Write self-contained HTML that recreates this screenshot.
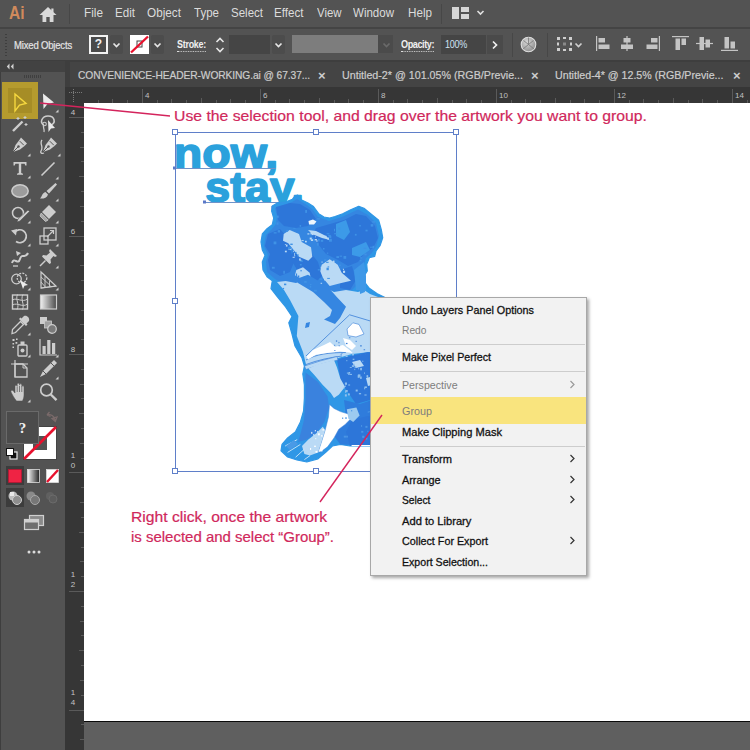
<!DOCTYPE html>
<html lang="en">
<head>
<meta charset="utf-8">
<title>Illustrator - Group artwork</title>
<style>
html,body{margin:0;padding:0;}
body{width:750px;height:750px;overflow:hidden;background:#535353;font-family:"Liberation Sans",sans-serif;}
#app{position:relative;width:750px;height:750px;overflow:hidden;background:#535353;}
.a{position:absolute;}
.t{position:absolute;white-space:nowrap;line-height:1;transform-origin:0 50%;}
/* bars */
#menubar{left:0;top:0;width:750px;height:27px;background:#535353;}
#sep1{left:0;top:27px;width:750px;height:2px;background:#444;}
#ctrl{left:0;top:29px;width:750px;height:31px;background:#535353;}
#tabrow{left:0;top:60px;width:750px;height:28px;background:#3e3e3e;}
#tabs{left:70px;top:62px;width:680px;height:25px;background:#444;}
#tools{left:0;top:72px;width:65px;height:678px;background:#535353;}
#toolhead{left:0;top:61px;width:65px;height:12px;background:#424242;}
#gut{left:66px;top:60px;width:4px;height:690px;background:#3c3c3c;}
#hruler{left:65px;top:87px;width:685px;height:16px;background:#363636;}
#vruler{left:65px;top:87px;width:19px;height:663px;background:#363636;}
#canvas{left:84px;top:103px;width:666px;height:618px;background:#fff;}
#bline{left:84px;top:720.5px;width:666px;height:1.5px;background:#0a0a0a;}
#bgray{left:84px;top:722px;width:666px;height:28px;background:#5f5f5f;}
.menu{color:#dcdcdc;font-size:12.5px;top:7px;}
.ann{color:#d0285c;font-size:14.5px;-webkit-text-stroke:0.2px #d0285c;}
.rl{color:#cfcfcf;font-size:9px;}
/* context menu */
#cm{left:370px;top:297px;width:215px;height:277px;background:#f2f2f2;border:1px solid #a8a8a8;box-shadow:2px 2px 3px rgba(0,0,0,.35);}
.mi{position:absolute;left:31px;white-space:nowrap;font-size:11.5px;color:#111;line-height:14px;-webkit-text-stroke:0.3px #111;}
.mi.dis{color:#7d7d7d;-webkit-text-stroke:0;}
.ms{position:absolute;left:29px;width:185px;height:1px;background:#cdcdcd;}
.arr{position:absolute;left:198px;font-size:12px;color:#333;line-height:14px;}
</style>
</head>
<body>
<div id="app">
<!--CHROME-->
<div class="a" id="menubar"></div>
<div class="a" id="sep1"></div>
<div class="a" id="ctrl"></div>
<div class="a" id="tabrow"></div>
<div class="a" id="tabs"></div>
<div class="a" id="toolhead"></div>
<div class="a" id="tools"></div>
<div class="a" id="vruler"></div>
<div class="a" id="hruler"></div>
<div class="a" id="canvas"></div>
<div class="a" id="bline"></div>
<div class="a" id="bgray"></div>
<div class="a" style="left:0;top:72px;width:1px;height:678px;background:#3e3e3e"></div>
<!--MENUBAR-->
<div class="t" id="ailogo" style="transform:scaleX(0.8158);left:9px;top:3px;font-size:19px;font-weight:bold;color:#d08a5c;">Ai</div>
<svg class="a" style="left:38px;top:6px" width="20" height="18" viewBox="0 0 20 18"><path d="M10 1 L1.5 9 H4.5 V16 H8.3 V11 H11.7 V16 H15.5 V9 H18.5 Z" fill="#d9d9d9"/><rect x="13.3" y="2.5" width="2.2" height="4" fill="#d9d9d9"/></svg>
<div class="a" style="left:69px;top:4px;width:1px;height:20px;background:#474747"></div>
<div class="t menu" id="mFile" style="transform:scaleX(0.9426);left:84px;">File</div>
<div class="t menu" id="mEdit" style="transform:scaleX(0.9282);left:115px;">Edit</div>
<div class="t menu" id="mObject" style="transform:scaleX(0.9408);left:147px;">Object</div>
<div class="t menu" id="mType" style="transform:scaleX(0.9222);left:194px;">Type</div>
<div class="t menu" id="mSelect" style="transform:scaleX(0.9209);left:231px;">Select</div>
<div class="t menu" id="mEffect" style="transform:scaleX(0.9296);left:274px;">Effect</div>
<div class="t menu" id="mView" style="transform:scaleX(0.9116);left:317px;">View</div>
<div class="t menu" id="mWindow" style="transform:scaleX(0.9220);left:353px;">Window</div>
<div class="t menu" id="mHelp" style="transform:scaleX(0.9332);left:408px;">Help</div>
<div class="a" style="left:441px;top:4px;width:1px;height:20px;background:#474747"></div>
<svg class="a" style="left:452px;top:7px" width="36" height="13" viewBox="0 0 36 13"><rect x="0" y="0" width="7" height="12" fill="#d6d6d6"/><rect x="9" y="0" width="8" height="5" fill="#d6d6d6"/><rect x="9" y="7" width="8" height="5" fill="#d6d6d6"/><path d="M25.5 4 L28.5 7 L31.5 4" stroke="#e0e0e0" stroke-width="1.6" fill="none"/></svg>
<!--CTRLBAR-->
<div class="a" style="left:110px;top:35px;width:13px;height:19px;background:#4c4c4c;border-radius:2px"></div>
<div class="a" style="left:151px;top:35px;width:13px;height:19px;background:#4c4c4c;border-radius:2px"></div>
<div class="a" style="left:272px;top:35px;width:13px;height:19px;background:#4c4c4c;border-radius:2px"></div>
<div class="a" style="left:5px;top:34px;width:2px;height:22px;background:repeating-linear-gradient(to bottom,#3e3e3e 0 1px,transparent 1px 3px)"></div>
<div class="t" style="transform:scaleX(0.9071);left:14px;top:40px;font-size:10.5px;color:#e4e4e4;letter-spacing:-0.2px;-webkit-text-stroke:0.2px #e4e4e4" id="mixed">Mixed Objects</div>
<div class="a" style="left:89px;top:35px;width:15px;height:15px;border:2px solid #f2f2f2;background:#4a4a4a;color:#f0f0f0;font-size:12px;font-weight:bold;text-align:center;line-height:15px;">?</div>
<svg class="a" style="left:112px;top:42px" width="9" height="7" viewBox="0 0 9 7"><path d="M1.5 1.5 L4.5 4.5 L7.5 1.5" stroke="#e6e6e6" stroke-width="1.7" fill="none"/></svg>
<svg class="a" style="left:130px;top:35px" width="19" height="19" viewBox="0 0 19 19"><rect x="0" y="0" width="19" height="19" fill="#fff"/><rect x="7" y="6" width="5" height="6" fill="none" stroke="#444" stroke-width="1"/><path d="M1 17.5 L18 1.5" stroke="#e8112d" stroke-width="2.4"/></svg>
<svg class="a" style="left:153px;top:42px" width="9" height="7" viewBox="0 0 9 7"><path d="M1.5 1.5 L4.5 4.5 L7.5 1.5" stroke="#e6e6e6" stroke-width="1.7" fill="none"/></svg>
<div class="t" style="transform:scaleX(0.8510);left:177px;top:39px;font-size:10.5px;color:#f0f0f0;font-weight:bold;letter-spacing:-0.3px;border-bottom:1px dotted #ddd;padding-bottom:1px" id="stroke">Stroke:</div>
<svg class="a" style="left:215px;top:36px" width="10" height="18" viewBox="0 0 10 18"><path d="M1.5 6 L5 2.5 L8.5 6 M1.5 12 L5 15.5 L8.5 12" stroke="#e6e6e6" stroke-width="1.6" fill="none"/></svg>
<div class="a" style="left:229px;top:35px;width:41px;height:19px;background:#454545"></div>
<svg class="a" style="left:274px;top:42px" width="9" height="7" viewBox="0 0 9 7"><path d="M1.5 1.5 L4.5 4.5 L7.5 1.5" stroke="#e6e6e6" stroke-width="1.7" fill="none"/></svg>
<div class="a" style="left:292px;top:35px;width:86px;height:18px;background:#7d7d7d"></div>
<div class="a" style="left:378px;top:35px;width:15px;height:18px;background:#4b4b4b"></div>
<svg class="a" style="left:382px;top:42px" width="9" height="7" viewBox="0 0 9 7"><path d="M1.5 1.5 L4.5 4.5 L7.5 1.5" stroke="#6a6a6a" stroke-width="1.7" fill="none"/></svg>
<div class="t" style="transform:scaleX(0.8681);left:401px;top:39px;font-size:10.5px;color:#f0f0f0;font-weight:bold;letter-spacing:-0.5px;border-bottom:1px dotted #ddd;padding-bottom:1px" id="opac">Opacity:</div>
<div class="a" style="left:441px;top:35px;width:45px;height:19px;background:#454545"></div>
<div class="t" style="transform:scaleX(0.9020);left:445px;top:40px;font-size:10px;color:#cfe2f3;letter-spacing:-0.3px" id="pct">100%</div>
<div class="a" style="left:487px;top:35px;width:16px;height:19px;background:#4a4a4a"></div>
<svg class="a" style="left:491px;top:40px" width="8" height="10" viewBox="0 0 8 10"><path d="M2 1.5 L5.5 5 L2 8.5" stroke="#f0f0f0" stroke-width="1.7" fill="none"/></svg>
<div class="a" style="left:512px;top:33px;width:1px;height:24px;background:#474747"></div>
<svg class="a" style="left:520px;top:36px" width="17" height="17" viewBox="0 0 17 17"><defs><radialGradient id="gl" cx="0.4" cy="0.35" r="0.7"><stop offset="0" stop-color="#d8d8d8"/><stop offset="1" stop-color="#8c8c8c"/></radialGradient></defs><circle cx="8.500" cy="8.500" r="7.300" fill="url(#gl)" stroke="#dedede" stroke-width="1.1"/><path d="M8.500 1.500 V8.500 L3 13 M8.500 8.500 L14 13 M3.500 4.500 L8.500 8.500 L13.500 4.500" stroke="#777" stroke-width="0.8" fill="none"/></svg>
<div class="a" style="left:547px;top:33px;width:1px;height:24px;background:#474747"></div>
<svg class="a" style="left:557px;top:37px" width="15" height="14" viewBox="0 0 15 14"><g fill="#cfcfcf"><rect x="0" y="0" width="3" height="3"/><rect x="6" y="0" width="3" height="2"/><rect x="12" y="0" width="3" height="3"/><rect x="0" y="5.500" width="2" height="3"/><rect x="13" y="5.500" width="2" height="3"/><rect x="0" y="11" width="3" height="3"/><rect x="6" y="12" width="3" height="2"/><rect x="12" y="11" width="3" height="3"/><rect x="6" y="5.500" width="3" height="3" fill="#8a8a8a"/></g></svg>
<svg class="a" style="left:574px;top:42px" width="9" height="7" viewBox="0 0 9 7"><path d="M1.5 1.5 L4.5 4.5 L7.5 1.5" stroke="#cfcfcf" stroke-width="1.7" fill="none"/></svg>
<svg class="a" style="left:596px;top:36px" width="14" height="15" viewBox="0 0 14 15"><g fill="#c4c4c4"><rect x="0" y="0" width="1.2" height="15"/><rect x="2.500" y="2" width="6.500" height="4.500"/><rect x="2.500" y="8.500" width="11" height="4.500"/></g></svg>
<svg class="a" style="left:620px;top:36px" width="14" height="15" viewBox="0 0 14 15"><g fill="#c4c4c4"><rect x="6.400" y="0" width="1.2" height="15"/><rect x="3.500" y="2" width="7" height="4.500"/><rect x="1" y="8.500" width="12" height="4.500"/></g></svg>
<svg class="a" style="left:646px;top:36px" width="14" height="15" viewBox="0 0 14 15"><g fill="#c4c4c4"><rect x="12.800" y="0" width="1.2" height="15"/><rect x="5" y="2" width="6.500" height="4.500"/><rect x="0.500" y="8.500" width="11" height="4.500"/></g></svg>
<svg class="a" style="left:672px;top:36px" width="17" height="15" viewBox="0 0 17 15"><g fill="#c4c4c4"><rect x="0" y="0" width="17" height="1.2"/><rect x="3.500" y="2.500" width="4.500" height="11.500"/><rect x="9.500" y="2.500" width="4.500" height="6.500"/></g></svg>
<svg class="a" style="left:696px;top:36px" width="17" height="15" viewBox="0 0 17 15"><g fill="#c4c4c4"><rect x="0" y="6.900" width="17" height="1.2"/><rect x="3.500" y="1" width="4.500" height="13"/><rect x="9.500" y="3.500" width="4.500" height="8"/></g></svg>
<svg class="a" style="left:721px;top:36px" width="17" height="15" viewBox="0 0 17 15"><g fill="#c4c4c4"><rect x="0" y="13.800" width="17" height="1.2"/><rect x="3.500" y="1" width="4.500" height="11.500"/><rect x="9.500" y="5.500" width="4.500" height="7"/></g></svg>
<!--TABS-->
<div class="t" style="transform:scaleX(0.9309);left:78px;top:70px;font-size:11px;color:#cdcdcd;letter-spacing:-0.1px;-webkit-text-stroke:0.2px #cdcdcd" id="tab1">CONVENIENCE-HEADER-WORKING.ai @ 67.37...</div>
<div class="t" style="left:318px;top:69px;font-size:13px;color:#cdcdcd;font-weight:bold">×</div>
<div class="t" style="transform:scaleX(0.9730);left:342px;top:70px;font-size:11px;color:#cdcdcd;-webkit-text-stroke:0.2px #cdcdcd" id="tab2">Untitled-2* @ 101.05% (RGB/Previe...</div>
<div class="t" style="left:531px;top:69px;font-size:13px;color:#cdcdcd;font-weight:bold">×</div>
<div class="t" style="transform:scaleX(0.9695);left:555px;top:70px;font-size:11px;color:#cdcdcd;-webkit-text-stroke:0.2px #cdcdcd" id="tab3">Untitled-4* @ 12.5% (RGB/Previe...</div>
<div class="t" style="left:733px;top:69px;font-size:13px;color:#cdcdcd;font-weight:bold">×</div>
<!--RULERS-->
<svg class="a" style="left:0;top:89px" width="750" height="14" viewBox="0 0 750 14"><g stroke="#5a5a5a" stroke-width="1" shape-rendering="crispEdges"><line x1="98.5" y1="11" x2="98.5" y2="14"/><line x1="112.5" y1="10" x2="112.5" y2="14"/><line x1="127.5" y1="11" x2="127.5" y2="14"/><line x1="142.5" y1="-1" x2="142.5" y2="14"/><line x1="157.5" y1="11" x2="157.5" y2="14"/><line x1="171.5" y1="10" x2="171.5" y2="14"/><line x1="186.5" y1="11" x2="186.5" y2="14"/><line x1="201.5" y1="9" x2="201.5" y2="14"/><line x1="216.5" y1="11" x2="216.5" y2="14"/><line x1="230.5" y1="10" x2="230.5" y2="14"/><line x1="245.5" y1="11" x2="245.5" y2="14"/><line x1="260.5" y1="-1" x2="260.5" y2="14"/><line x1="275.5" y1="11" x2="275.5" y2="14"/><line x1="289.5" y1="10" x2="289.5" y2="14"/><line x1="304.5" y1="11" x2="304.5" y2="14"/><line x1="319.5" y1="9" x2="319.5" y2="14"/><line x1="334.5" y1="11" x2="334.5" y2="14"/><line x1="348.5" y1="10" x2="348.5" y2="14"/><line x1="363.5" y1="11" x2="363.5" y2="14"/><line x1="378.5" y1="-1" x2="378.5" y2="14"/><line x1="393.5" y1="11" x2="393.5" y2="14"/><line x1="407.5" y1="10" x2="407.5" y2="14"/><line x1="422.5" y1="11" x2="422.5" y2="14"/><line x1="437.5" y1="9" x2="437.5" y2="14"/><line x1="452.5" y1="11" x2="452.5" y2="14"/><line x1="466.5" y1="10" x2="466.5" y2="14"/><line x1="481.5" y1="11" x2="481.5" y2="14"/><line x1="496.5" y1="-1" x2="496.5" y2="14"/><line x1="511.5" y1="11" x2="511.5" y2="14"/><line x1="525.5" y1="10" x2="525.5" y2="14"/><line x1="540.5" y1="11" x2="540.5" y2="14"/><line x1="555.5" y1="9" x2="555.5" y2="14"/><line x1="570.5" y1="11" x2="570.5" y2="14"/><line x1="584.5" y1="10" x2="584.5" y2="14"/><line x1="599.5" y1="11" x2="599.5" y2="14"/><line x1="614.5" y1="-1" x2="614.5" y2="14"/><line x1="629.5" y1="11" x2="629.5" y2="14"/><line x1="643.5" y1="10" x2="643.5" y2="14"/><line x1="658.5" y1="11" x2="658.5" y2="14"/><line x1="673.5" y1="9" x2="673.5" y2="14"/><line x1="688.5" y1="11" x2="688.5" y2="14"/><line x1="702.5" y1="10" x2="702.5" y2="14"/><line x1="717.5" y1="11" x2="717.5" y2="14"/><line x1="732.5" y1="-1" x2="732.5" y2="14"/><line x1="747.5" y1="11" x2="747.5" y2="14"/></g><g font-family="Liberation Sans, sans-serif" font-size="8" fill="#c0c0c0"><text x="145.0" y="9">4</text><text x="263.0" y="9">6</text><text x="381.0" y="9">8</text><text x="499.0" y="9">10</text><text x="617.0" y="9">12</text><text x="735.0" y="9">14</text></g></svg>
<svg class="a" style="left:68px;top:88px" width="16" height="15" viewBox="0 0 16 15"><path d="M5.5 1 V15 M1 4.500 H15" stroke="#7a7a7a" stroke-width="1" stroke-dasharray="1 1" fill="none"/></svg>
<svg class="a" style="left:66px;top:102px" width="18" height="648" viewBox="0 0 18 648"><g stroke="#5a5a5a" stroke-width="1" shape-rendering="crispEdges"><line x1="3" y1="15.5" x2="18" y2="15.5"/><line x1="15" y1="30.5" x2="18" y2="30.5"/><line x1="14" y1="45.5" x2="18" y2="45.5"/><line x1="15" y1="59.5" x2="18" y2="59.5"/><line x1="13" y1="74.5" x2="18" y2="74.5"/><line x1="15" y1="89.5" x2="18" y2="89.5"/><line x1="14" y1="104.5" x2="18" y2="104.5"/><line x1="15" y1="119.5" x2="18" y2="119.5"/><line x1="3" y1="134.5" x2="18" y2="134.5"/><line x1="15" y1="148.5" x2="18" y2="148.5"/><line x1="14" y1="163.5" x2="18" y2="163.5"/><line x1="15" y1="178.5" x2="18" y2="178.5"/><line x1="13" y1="193.5" x2="18" y2="193.5"/><line x1="15" y1="208.5" x2="18" y2="208.5"/><line x1="14" y1="222.5" x2="18" y2="222.5"/><line x1="15" y1="237.5" x2="18" y2="237.5"/><line x1="3" y1="252.5" x2="18" y2="252.5"/><line x1="15" y1="267.5" x2="18" y2="267.5"/><line x1="14" y1="282.5" x2="18" y2="282.5"/><line x1="15" y1="296.5" x2="18" y2="296.5"/><line x1="13" y1="311.5" x2="18" y2="311.5"/><line x1="15" y1="326.5" x2="18" y2="326.5"/><line x1="14" y1="341.5" x2="18" y2="341.5"/><line x1="15" y1="356.5" x2="18" y2="356.5"/><line x1="3" y1="370.5" x2="18" y2="370.5"/><line x1="15" y1="385.5" x2="18" y2="385.5"/><line x1="14" y1="400.5" x2="18" y2="400.5"/><line x1="15" y1="415.5" x2="18" y2="415.5"/><line x1="13" y1="430.5" x2="18" y2="430.5"/><line x1="15" y1="445.5" x2="18" y2="445.5"/><line x1="14" y1="459.5" x2="18" y2="459.5"/><line x1="15" y1="474.5" x2="18" y2="474.5"/><line x1="3" y1="489.5" x2="18" y2="489.5"/><line x1="15" y1="504.5" x2="18" y2="504.5"/><line x1="14" y1="519.5" x2="18" y2="519.5"/><line x1="15" y1="533.5" x2="18" y2="533.5"/><line x1="13" y1="548.5" x2="18" y2="548.5"/><line x1="15" y1="563.5" x2="18" y2="563.5"/><line x1="14" y1="578.5" x2="18" y2="578.5"/><line x1="15" y1="593.5" x2="18" y2="593.5"/><line x1="3" y1="608.5" x2="18" y2="608.5"/><line x1="15" y1="622.5" x2="18" y2="622.5"/><line x1="14" y1="637.5" x2="18" y2="637.5"/></g><g font-family="Liberation Sans, sans-serif" font-size="8" fill="#c4c4c4" text-anchor="middle"><text x="7" y="13.0">4</text><text x="7" y="131.5">6</text><text x="7" y="250.0">8</text><text x="7" y="356.0">1</text><text x="7" y="366.0">0</text><text x="7" y="474.5">1</text><text x="7" y="484.5">2</text><text x="7" y="593.0">1</text><text x="7" y="603.0">4</text></g></svg>
<!--TOOLS-->
<svg class="a" style="left:6px;top:63px" width="8" height="7" viewBox="0 0 8 7"><path d="M3.5 0.5 L0.8 3.5 L3.5 6.5 Z M7.5 0.5 L4.8 3.5 L7.5 6.5 Z" fill="#d0d0d0"/></svg>
<div class="a" style="left:24px;top:75px;width:18px;height:3px;background:repeating-linear-gradient(to right,#3f3f3f 0 1px,transparent 1px 2px)"></div>
<div class="a" style="left:2px;top:82px;width:36px;height:37px;background:#b59b2e"></div>
<div class="a" style="left:8px;top:88px;width:24px;height:25px;background:#a68d26"></div>
<svg class="a" style="left:9.5px;top:91.7px" width="22" height="22" viewBox="-10 -10 22 22"><path d="M-5 -8 L6 1.5 L-0.5 3 L-5 9 Z" fill="none" stroke="#f6d83f" stroke-width="1.4" stroke-linejoin="miter"/></svg>
<svg class="a" style="left:37.5px;top:91.7px" width="22" height="22" viewBox="-10 -10 22 22"><path d="M-5 -8.5 L6 0.5 L-0.5 2 L-4.5 7 Z" fill="#ececec"/><path d="M10.5 7.5 V10.5 H7.5 Z" fill="#cfcfcf"/></svg>
<svg class="a" style="left:9.5px;top:114.0px" width="22" height="22" viewBox="-10 -10 22 22"><path d="M-7 7 L2.5 -2.5" stroke="#cdcdcd" stroke-width="2.4" stroke-linecap="butt"/><path d="M-2 -7 v3 M-3.5 -5.5 h3 M5 -8 v3 M3.5 -6.5 h3 M6 -1 v3 M4.5 0.5 h3" stroke="#cdcdcd" stroke-width="1.1"/></svg>
<svg class="a" style="left:37.5px;top:114.0px" width="22" height="22" viewBox="-10 -10 22 22"><path d="M-4 1 C-9 -1 -6 -8 0 -8 C7 -8 8 -1 3 1" fill="none" stroke="#cdcdcd" stroke-width="1.6"/><path d="M-4 1 C-6 3 -3 5 -4 8" fill="none" stroke="#cdcdcd" stroke-width="1.3"/><circle cx="-3.5" cy="0" r="1.8" fill="none" stroke="#cdcdcd" stroke-width="1.1"/><path d="M0 -4 L7 4 L3 4.5 L0.5 8 Z" fill="#e8e8e8"/></svg>
<svg class="a" style="left:9.5px;top:136.3px" width="22" height="22" viewBox="-10 -10 22 22"><path d="M1 -8.5 L7 -2.5 L4.5 0 L0 3.5 L-7 6 L-4.5 -1 L-1 -5.5 Z" fill="#cdcdcd"/><path d="M-7 6 L-2 1" stroke="#535353" stroke-width="1"/><circle cx="-1.5" cy="0.5" r="1.2" fill="#535353"/><path d="M3.8 -0.8 L-0.2 -4.8" stroke="#535353" stroke-width="1"/><path d="M10.5 7.5 V10.5 H7.5 Z" fill="#cfcfcf"/></svg>
<svg class="a" style="left:39.5px;top:136.3px" width="22" height="22" viewBox="-10 -10 22 22"><path d="M1 -8.5 L7 -2.5 L4.5 0 L0 3.5 L-7 6 L-4.5 -1 L-1 -5.5 Z" fill="#cdcdcd"/><path d="M-7 6 L-2 1" stroke="#535353" stroke-width="1"/><circle cx="-1.5" cy="0.5" r="1.2" fill="#535353"/><path d="M3.8 -0.8 L-0.2 -4.8" stroke="#535353" stroke-width="1"/><path d="M-8 -6 C-11 -2 -6 0 -9 5 C-10 7 -8 8 -6 7" fill="none" stroke="#cdcdcd" stroke-width="1.3"/><path d="M10.5 7.5 V10.5 H7.5 Z" fill="#cfcfcf"/></svg>
<svg class="a" style="left:9.5px;top:158.1px" width="22" height="22" viewBox="-10 -10 22 22"><path d="M-6.5 -6 H6.5 V-2.500 H5.3 L4.6 -4.300 H1.2 V5 L3 5.700 V6.700 H-3 V5.700 L-1.2 5 V-4.300 H-4.600 L-5.300 -2.500 H-6.500 Z" fill="#cdcdcd"/><path d="M10.5 7.5 V10.5 H7.5 Z" fill="#cfcfcf"/></svg>
<svg class="a" style="left:37.5px;top:158.6px" width="22" height="22" viewBox="-10 -10 22 22"><path d="M-6.5 6.5 L6.5 -6.5" stroke="#cdcdcd" stroke-width="1.6"/><path d="M10.5 7.5 V10.5 H7.5 Z" fill="#cfcfcf"/></svg>
<svg class="a" style="left:9.5px;top:180.9px" width="22" height="22" viewBox="-10 -10 22 22"><ellipse cx="0" cy="0" rx="8.2" ry="6.2" fill="#9c9c9c" stroke="#cdcdcd" stroke-width="1.5"/><path d="M10.5 7.5 V10.5 H7.5 Z" fill="#cfcfcf"/></svg>
<svg class="a" style="left:37.5px;top:180.9px" width="22" height="22" viewBox="-10 -10 22 22"><path d="M7.5 -8 L9 -6.5 L1 2.5 L-1.5 0 Z" fill="#cdcdcd"/><path d="M-2.5 1 L0 3.5 C-1 7 -5 8 -8 7.5 C-6 6 -6 2 -2.5 1 Z" fill="#cdcdcd"/><path d="M10.5 7.5 V10.5 H7.5 Z" fill="#cfcfcf"/></svg>
<svg class="a" style="left:9.5px;top:203.2px" width="22" height="22" viewBox="-10 -10 22 22"><circle cx="-2" cy="0" r="5.5" fill="none" stroke="#cdcdcd" stroke-width="1.5"/><path d="M8 -3 L9.5 -1.5 L0 8 L-3 9 L-2 6 Z" fill="#cdcdcd" stroke="#535353" stroke-width="0.6"/><path d="M10.5 7.5 V10.5 H7.5 Z" fill="#cfcfcf"/></svg>
<svg class="a" style="left:37.5px;top:203.2px" width="22" height="22" viewBox="-10 -10 22 22"><path d="M1 -8 L8 -1 L1 6 L-6 -1 Z" fill="#cdcdcd"/><path d="M-6.8 0 L0.2 7 L-2.5 8.5 L-8 3 Z" fill="#a8a8a8" stroke="#cdcdcd" stroke-width="0.8"/><path d="M10.5 7.5 V10.5 H7.5 Z" fill="#cfcfcf"/></svg>
<svg class="a" style="left:9.5px;top:225.5px" width="22" height="22" viewBox="-10 -10 22 22"><path d="M-5.5 -3.5 A6.5 6.5 0 1 1 -4 5.5" fill="none" stroke="#cdcdcd" stroke-width="1.7"/><path d="M-9 -5.5 L-3 -7 L-4 -0.5 Z" fill="#cdcdcd"/><path d="M10.5 7.5 V10.5 H7.5 Z" fill="#cfcfcf"/></svg>
<svg class="a" style="left:37.5px;top:225.5px" width="22" height="22" viewBox="-10 -10 22 22"><rect x="-8" y="0" width="8" height="8" fill="none" stroke="#cdcdcd" stroke-width="1.3"/><rect x="-4" y="-8" width="12" height="12" fill="none" stroke="#cdcdcd" stroke-width="1.3"/><path d="M-1 1 L5 -5 M2 -5.5 H5.5 V-2" stroke="#cdcdcd" stroke-width="1.2" fill="none"/><path d="M10.5 7.5 V10.5 H7.5 Z" fill="#cfcfcf"/></svg>
<svg class="a" style="left:9.5px;top:247.8px" width="22" height="22" viewBox="-10 -10 22 22"><path d="M-8 5 C-6 -2 -2 8 0 1 C2 -6 5 2 8 -5" fill="none" stroke="#cdcdcd" stroke-width="2"/><path d="M-4 -7 L1 -5 L-3 -2 Z" fill="#cdcdcd"/><path d="M-7 8 h5" stroke="#cdcdcd" stroke-width="1.3"/><path d="M10.5 7.5 V10.5 H7.5 Z" fill="#cfcfcf"/></svg>
<svg class="a" style="left:37.5px;top:247.8px" width="22" height="22" viewBox="-10 -10 22 22"><path d="M2 -9 L9 -2 L7 -1 L5.5 -2 L2.5 1.5 L3 5 L1.5 6 L-6 -1.5 L-5 -3 L-1.5 -2.5 L2 -5.5 L1 -7 Z" fill="#cdcdcd"/><path d="M-2.5 2.5 L-8 8" stroke="#cdcdcd" stroke-width="1.5"/><path d="M10.5 7.5 V10.5 H7.5 Z" fill="#cfcfcf"/></svg>
<svg class="a" style="left:9.5px;top:270.1px" width="22" height="22" viewBox="-10 -10 22 22"><circle cx="-3.5" cy="-1" r="4.8" fill="none" stroke="#cdcdcd" stroke-width="1.3"/><circle cx="2" cy="-2" r="4.8" fill="none" stroke="#cdcdcd" stroke-width="1.3" stroke-dasharray="2 1.2"/><path d="M0 0 L8 5 L4.5 5.8 L3 9 Z" fill="#ececec"/><path d="M10.5 7.5 V10.5 H7.5 Z" fill="#cfcfcf"/></svg>
<svg class="a" style="left:37.5px;top:270.1px" width="22" height="22" viewBox="-10 -10 22 22"><path d="M-7 -8 V8 L8 6 Z" fill="none" stroke="#cdcdcd" stroke-width="1.2"/><path d="M-7 -3 L2.5 5.7 M-7 2 L-2.5 7.2 M-3 -3.8 V7.3 M1.5 1 V6.8 M-7 8 L8 6" stroke="#cdcdcd" stroke-width="0.9" fill="none"/><path d="M10.5 7.5 V10.5 H7.5 Z" fill="#cfcfcf"/></svg>
<svg class="a" style="left:9.5px;top:292.4px" width="22" height="22" viewBox="-10 -10 22 22"><rect x="-7.5" y="-7" width="15" height="14" fill="none" stroke="#cdcdcd" stroke-width="1.4"/><path d="M-7.5 -2 C-3 -5 2 1 7.5 -3 M-7.5 3 C-2 0 2 6 7.5 2 M-2.5 -7.5 C-5 -2 0 2 -3 7.5 M3 -7.5 C0 -2 5 2 2.5 7.5" fill="none" stroke="#cdcdcd" stroke-width="1"/></svg>
<svg class="a" style="left:37.5px;top:292.4px" width="22" height="22" viewBox="-10 -10 22 22"><defs><linearGradient id="gg" x1="0" x2="1" y1="0" y2="0"><stop offset="0" stop-color="#f2f2f2"/><stop offset="1" stop-color="#4a4a4a"/></linearGradient></defs><rect x="-7.5" y="-7" width="16" height="14" fill="url(#gg)" stroke="#cdcdcd" stroke-width="1.2"/></svg>
<svg class="a" style="left:9.5px;top:314.7px" width="22" height="22" viewBox="-10 -10 22 22"><path d="M4 -9 C7 -10 10 -7 9 -4 L6.5 -1.5 L7.5 -0.5 L6 1 L-1 -6 L0.5 -7.5 L1.5 -6.5 Z" fill="#cdcdcd"/><path d="M0.5 -3.5 L3.5 -0.5 L-4.5 7.5 L-8 8.5 L-7.5 4.5 Z" fill="none" stroke="#cdcdcd" stroke-width="1.3"/><path d="M10.5 7.5 V10.5 H7.5 Z" fill="#cfcfcf"/></svg>
<svg class="a" style="left:37.5px;top:314.7px" width="22" height="22" viewBox="-10 -10 22 22"><rect x="-8" y="-8" width="7" height="7" fill="#cdcdcd"/><rect x="-3.5" y="-4" width="7" height="7" fill="#a0a0a0" stroke="#cdcdcd" stroke-width="0.8"/><circle cx="4" cy="4" r="4.3" fill="#7a7a7a" stroke="#cdcdcd" stroke-width="1.2"/></svg>
<svg class="a" style="left:9.5px;top:337.0px" width="22" height="22" viewBox="-10 -10 22 22"><rect x="-2" y="-2" width="9" height="11" rx="1" fill="none" stroke="#cdcdcd" stroke-width="1.4"/><rect x="0.5" y="-5.5" width="4" height="3.5" fill="#cdcdcd"/><circle cx="2.5" cy="3.5" r="2" fill="#cdcdcd"/><path d="M-7.5 -8 h2 v2 h-2 Z M-4 -8.5 h1.6 v1.6 h-1.6 Z M-7.5 -4 h1.6 v1.6 h-1.6 Z M-4.5 -5 h1.8 v1.8 h-1.8 Z M-7.5 -0.5 h1.5 v1.5 h-1.5Z" fill="#cdcdcd"/><path d="M10.5 7.5 V10.5 H7.5 Z" fill="#cfcfcf"/></svg>
<svg class="a" style="left:37.5px;top:337.0px" width="22" height="22" viewBox="-10 -10 22 22"><path d="M-8 -8 V8 H9" fill="none" stroke="#cdcdcd" stroke-width="1.2"/><rect x="-5.5" y="-1" width="3.2" height="8" fill="#cdcdcd"/><rect x="-0.8" y="-7" width="3.2" height="14" fill="#cdcdcd"/><rect x="4" y="-4" width="3.2" height="11" fill="#cdcdcd"/><path d="M10.5 7.5 V10.5 H7.5 Z" fill="#cfcfcf"/></svg>
<svg class="a" style="left:9.5px;top:359.3px" width="22" height="22" viewBox="-10 -10 22 22"><path d="M-5 -9 V8 M-9 -5 H8" stroke="#cdcdcd" stroke-width="1.2" fill="none"/><path d="M-5 -5 H3 L7 -1 V8 H-5 Z" fill="none" stroke="#cdcdcd" stroke-width="1.3"/><path d="M3 -5 V-1 H7" fill="none" stroke="#cdcdcd" stroke-width="1"/></svg>
<svg class="a" style="left:37.5px;top:359.3px" width="22" height="22" viewBox="-10 -10 22 22"><path d="M6 -9 L9 -6 L-2 5 L-8 8 L-5 2 Z" fill="#cdcdcd"/><path d="M-5 2 L-2 5" stroke="#535353" stroke-width="1"/><path d="M3 -6 L6 -3" stroke="#535353" stroke-width="1"/><path d="M10.5 7.5 V10.5 H7.5 Z" fill="#cfcfcf"/></svg>
<svg class="a" style="left:9.5px;top:381.6px" width="22" height="22" viewBox="-10 -10 22 22"><path d="M-3.5 9 C-6 6 -8 2 -9 0 C-9.5 -1.5 -8 -2.5 -6.8 -1.2 L-5 1 V-5.5 C-5 -7.3 -2.8 -7.3 -2.8 -5.5 V-7.5 C-2.8 -9.3 -0.5 -9.3 -0.5 -7.5 V-6.8 C-0.5 -8.6 1.8 -8.6 1.8 -6.8 V-5 C1.8 -6.8 4 -6.8 4 -5 V3 C4 6 3 7.5 2.5 9 Z" fill="#cdcdcd" stroke="#535353" stroke-width="0.5"/><path d="M-2.8 -5 V0 M-0.5 -6 V0 M1.8 -5 V0" stroke="#535353" stroke-width="0.7"/><path d="M10.5 7.5 V10.5 H7.5 Z" fill="#cfcfcf"/></svg>
<svg class="a" style="left:37.5px;top:381.6px" width="22" height="22" viewBox="-10 -10 22 22"><circle cx="-1.5" cy="-2" r="5.8" fill="none" stroke="#cdcdcd" stroke-width="1.7"/><path d="M2.8 2.5 L8.5 8.2" stroke="#cdcdcd" stroke-width="2.4"/></svg>
<svg class="a" style="left:0;top:405px" width="66" height="160" viewBox="0 405 66 160"><path d="M47 415 A6 6 0 0 1 55 420 M57 417 L55.3 421.5 L52 418.5 Z M47 415 L49.5 412 M47 415 L50.5 416.5" stroke="#7a6a6a" stroke-width="1.3" fill="none"/><rect x="23.5" y="426.5" width="33" height="33" fill="#fff" stroke="#444" stroke-width="1"/><rect x="33" y="436" width="14" height="14" fill="#535353"/><path d="M24 459 L56 427" stroke="#e8112d" stroke-width="2.6"/><rect x="6.5" y="411.5" width="32" height="32" fill="#4b4b4b" stroke="#6a6a6a" stroke-width="1"/><text x="22.5" y="433" font-family="Liberation Serif, serif" font-weight="bold" font-size="15" fill="#f2f2f2" text-anchor="middle">?</text><rect x="10" y="452" width="7" height="7" fill="#111" stroke="#eee" stroke-width="1.2"/><rect x="6.5" y="448.500" width="7" height="7" fill="#fff" stroke="#111" stroke-width="1"/><rect x="6" y="466" width="18" height="19" fill="#3c3c3c"/><rect x="8.5" y="469.5" width="13" height="13" fill="#ef2344" stroke="#c01030" stroke-width="0.6"/><defs><linearGradient id="g2" x1="0" x2="1"><stop offset="0" stop-color="#fafafa"/><stop offset="1" stop-color="#222"/></linearGradient></defs><rect x="27.500" y="469.500" width="12" height="13" fill="url(#g2)" stroke="#ddd" stroke-width="0.8"/><rect x="46.500" y="469.500" width="12" height="13" fill="#fff" stroke="#ddd" stroke-width="0.8"/><path d="M47 482 L58 470" stroke="#e8112d" stroke-width="2.4"/><rect x="6" y="488" width="18" height="19" fill="#3c3c3c"/><circle cx="13" cy="496" r="4.5" fill="#bdbdbd"/><circle cx="17" cy="500" r="4.5" fill="#8e8e8e" stroke="#cfcfcf" stroke-width="1"/><rect x="10" y="492" width="4" height="4" fill="#e8e8e8"/><circle cx="31" cy="496" r="4.5" fill="#8a8a8a"/><circle cx="35" cy="500" r="4.5" fill="#777" stroke="#a8a8a8" stroke-width="1"/><circle cx="50" cy="496" r="4" fill="#606060"/><circle cx="53" cy="499" r="4" fill="#5c5c5c" stroke="#6a6a6a" stroke-width="1"/><rect x="29.5" y="515.500" width="14" height="10" fill="#8a8a8a" stroke="#d0d0d0" stroke-width="1.2"/><rect x="24.500" y="519.500" width="14" height="10" fill="#6f6f6f" stroke="#d0d0d0" stroke-width="1.2"/><rect x="25" y="520" width="13" height="2.500" fill="#d0d0d0"/><circle cx="29" cy="552" r="1.500" fill="#dcdcdc"/><circle cx="34" cy="552" r="1.500" fill="#dcdcdc"/><circle cx="39" cy="552" r="1.500" fill="#dcdcdc"/></svg>
<!--ART-->
<svg class="a" style="left:0;top:0" width="750" height="750" viewBox="0 0 750 750">
<g font-family="Liberation Sans, sans-serif" font-weight="bold" fill="#2ba1dc" stroke="#2ba1dc" stroke-width="1.6" stroke-linejoin="round">
<text id="now" x="173.8" y="168" font-size="42" textLength="104.4" lengthAdjust="spacingAndGlyphs">now,</text>
<text id="stay" x="205.3" y="202" font-size="42" textLength="98.5" lengthAdjust="spacingAndGlyphs">stay.</text>
</g>
<path d="M175 168.5 H276 M205 202.5 H300" stroke="#6f93c9" stroke-width="1" fill="none"/>
<rect x="173" y="166.5" width="3" height="3" fill="#5a78c8"/><rect x="203" y="200.5" width="3" height="3" fill="#5a78c8"/>
<clipPath id="dogclip"><polygon points="297.7,195 301.7,200 308,203 313.5,206.5 318.7,213.7 324,217 329.7,218 335,216.5 342.7,213.7 350.7,209.7 358.7,206.3 364,208.3 370.7,213.7 378.7,220.3 381.3,229.7 382.7,237.7 380,245.7 376,251 374.7,256.3 369.3,257.7 366.7,264.3 367.3,271 364,276.3 365.3,283 369.3,288.3 377.3,293.7 386,298 386,446 366,446 350,446 340.4,444.4 332.4,446 326,452 318,458.8 306.8,462 297,460 287.6,457 281,450.8 282,444.4 287.6,438 295.6,431.6 300.4,422 303.6,410.8 304.4,398 304.4,385 302.8,374 304.4,366 302,358 295,346 292,334 288.8,322.8 292,316.4 285.6,306.8 277.6,297 271,288.7 272.3,280.7 267,276.7 263,270 262.3,262 265,255.3 262.3,250 261,242 262.3,234 267,228.7 272.3,224.7 273.7,218 271.7,211.3 272.3,206 277.7,202.7 285.7,202 292.3,199.3 295,196"/></clipPath>
<g id="dog">
<polygon points="297.7,195 301.7,200 308,203 313.5,206.5 318.7,213.7 324,217 329.7,218 335,216.5 342.7,213.7 350.7,209.7 358.7,206.3 364,208.3 370.7,213.7 378.7,220.3 381.3,229.7 382.7,237.7 380,245.7 376,251 374.7,256.3 369.3,257.7 366.7,264.3 367.3,271 364,276.3 365.3,283 369.3,288.3 377.3,293.7 386,298 386,446 366,446 350,446 340.4,444.4 332.4,446 326,452 318,458.8 306.8,462 297,460 287.6,457 281,450.8 282,444.4 287.6,438 295.6,431.6 300.4,422 303.6,410.8 304.4,398 304.4,385 302.8,374 304.4,366 302,358 295,346 292,334 288.8,322.8 292,316.4 285.6,306.8 277.6,297 271,288.7 272.3,280.7 267,276.7 263,270 262.3,262 265,255.3 262.3,250 261,242 262.3,234 267,228.7 272.3,224.7 273.7,218 271.7,211.3 272.3,206 277.7,202.7 285.7,202 292.3,199.3 295,196" fill="#2f97e6" stroke="#2f97e6" stroke-width="1.2" stroke-linejoin="round"/>
<polygon points="297,199 307,205 313,210 318,217 329,221 342,217 358,209.5 368,215 376,223 379,236 376,247 371,254 366,258 363,268 360,282 352,290 338,292 322,290 300,286 284,284 275,279 267,272 266,262 268,255 264,246 266,235 272,229 276,224 277,216 275,208 284,205 292,202" fill="#3586e1"/>
<polygon points="276,207 290,203 300,204 310,210 316,219 308,226 296,228 284,226 278,220" fill="#2d76d9"/>
<polygon points="268,234 280,229 286,236 290,248 294,262 290,272 280,276 270,270 268,260 270,254 265,246" fill="#2d76d9"/>
<polygon points="316,228 330,224 344,220 356,214 366,216 375,226 378,238 373,248 364,254 358,262 348,266 338,260 326,254 318,244 312,236" fill="#2d76d9"/>
<polygon points="296,246 310,252 318,262 322,276 314,284 300,282 296,268 290,258" fill="#2d76d9"/>
<polygon points="340,270 352,266 356,280 350,290 340,288" fill="#2d76d9"/>
<polygon points="336,224 346,220 350,232 344,240 336,236" fill="#3c9ae8"/>
<polygon points="352,248 366,242 370,250 360,257 352,255" fill="#3c9ae8"/>
<polygon points="354,270 364,262 366,276 366,290 356,290" fill="#3f98e8"/>
<polygon points="283.7,234 289.7,230 299,234 301.7,242 311,247.3 312.3,256.7 308.3,260.7 299,256.7 293.7,250 288.3,243.3 283,240.7" fill="#badaf5"/>
<polygon points="296.3,270 303,267.3 309.7,272.7 311,279.3 301.7,279.3 295,275.3" fill="#badaf5"/>
<polygon points="321.7,264.7 329.7,259.3 337.7,264.7 341.7,272.7 351,280.7 340.3,283.3 329.7,286 323,278 320.3,271.3" fill="#badaf5"/>
<polygon points="308,230 316,231 326,236 330,240 322,238 312,234" fill="#badaf5"/>
<polygon points="308.5,221 313,219.5 316.5,221.5 314,224.5 309,224.5" fill="#eef6fd"/>
<polygon points="277,282 285.6,281 296,283 308,278 322,286 334,292 346,290 358,292 364,290 370,294 386,300 386,360 370,352 352,354 338,358 318,362 306.4,366 303,352 296.8,336 298.4,316 290,300 284,290" fill="#badaf5"/>
<polygon points="295,279.6 308,274.8 327,286 336.8,297 346,306.8 340,318 335,324 324,319.6 330,316 332,310 324,302 313,292 298,283" fill="#3586e1"/>
<polygon points="359,270 364,268 365,292 360,294" fill="#3f98e8"/>
<polygon points="306,323 310,322 309,327 305,328" fill="#3586e1"/>
<path fill="none" stroke="#3a7fd8" stroke-width="0.8" d="M306 356 L349.600 314.800 L372 321.500 M306 360 C316 354 330 352.500 346 352.500 M306 364.500 C318 360 330 357.500 342 356"/>
<polygon points="347,329 352.8,322.8 359,324.4 364,334 356,337 348,335.6" fill="#fff" stroke="#3a7fd8" stroke-width="0.6"/>
<polygon points="306.4,356.4 312.8,350 324,345 330,342 335,346.8 343,345 349.6,350 352.8,353 340,351.6 327,353 316,354.8 308,359.6" fill="#fff"/>
<polygon points="343,338 350,340 356,346 352,350 346,346" fill="#fff"/>
<polygon points="337,359.6 350,356 368,352 386,356 386,404 370,400 356,404 345,388 340.4,378.8" fill="#2d76d9"/>
<polygon points="352,362 360,360 364,366 356,368" fill="#badaf5"/>
<polygon points="366,378 374,376 376,384 368,386" fill="#badaf5"/>
<polygon points="344,400 360,404 372,400 386,404 386,446 340.4,444.4 334,436 338,424 346,416" fill="#2f7cdc"/>
<polygon points="352,420 368,416 386,420 386,446 350,446 346,432" fill="#2d76d9"/>
<polygon points="304.4,366 320,361 337,356.5 338,360 322,364 306,369.5" fill="#badaf5" stroke="#3a7fd8" stroke-width="0.6"/>
<polygon points="308.4,368.6 316.4,364.8 334,360 337,367.6 340.4,378.8 345,386.8 338.8,394.8 334,398 330.8,393 322.8,385 314.8,375.6" fill="#badaf5"/>
<polygon points="305.5,372.4 318,382 327.6,396.4 329,407.6 324.4,422 316.4,433 306.8,439.6 298,442 301,432 304,420 305.5,400" fill="#3a82de"/>
<polygon points="329.5,404.4 334,408.4 340.4,411.6 348.4,414 350.8,418.8 345.2,424.4 338.8,429.2 334,438 327.6,446.8 321.2,451.6 318,452.4 321.2,442.8 325.2,430 328.4,417.2" fill="#fff" stroke="#3a7fd8" stroke-width="0.5"/>
<polygon points="302,446 308.4,439.6 316.4,433.2 322.8,426.8 325.2,430 321.2,442.8 318,452.4 310,455.6 304.4,454" fill="#badaf5"/>
<path d="M285.2 446 L297.2 439.6 M287.6 452.4 L300.4 444.4 M295.6 457.2 L304.4 449.2 M304.4 459.6 L310 455.6" fill="none" stroke="#cfe6f8" stroke-width="0.9"/>
<polygon points="346.8,409.2 356.4,407.6 359.6,415.6 353.2,422 348.4,418.8" fill="#9ccaf0"/>
<polygon points="286,446 294,440 298,444 290,450" fill="#4a9ae6"/>
<path d="M351.600 445.500 H386" stroke="#fff" stroke-width="1"/>
<g clip-path="url(#dogclip)"><rect x="291.8" y="236.2" width="1.7" height="0.9" fill="#badaf5"/><rect x="296.9" y="242.2" width="0.9" height="1.5" fill="#badaf5"/><rect x="284.9" y="244.1" width="0.9" height="0.9" fill="#badaf5"/><rect x="294.2" y="255.2" width="1.0" height="1.1" fill="#badaf5"/><rect x="299.1" y="258.5" width="1.6" height="1.4" fill="#badaf5"/><rect x="307.4" y="233.3" width="2.0" height="1.2" fill="#badaf5"/><rect x="287.5" y="235.3" width="1.2" height="1.9" fill="#badaf5"/><rect x="288.3" y="248.3" width="1.7" height="1.3" fill="#badaf5"/><rect x="297.1" y="233.8" width="0.9" height="1.1" fill="#badaf5"/><rect x="300.3" y="244.0" width="1.2" height="1.6" fill="#badaf5"/><rect x="294.9" y="240.4" width="1.9" height="1.8" fill="#badaf5"/><rect x="289.9" y="248.1" width="1.5" height="2.0" fill="#badaf5"/><rect x="301.5" y="240.1" width="2.2" height="1.0" fill="#badaf5"/><rect x="294.0" y="253.2" width="1.0" height="1.5" fill="#badaf5"/><rect x="284.9" y="250.7" width="1.9" height="1.6" fill="#badaf5"/><rect x="305.0" y="240.8" width="1.8" height="1.6" fill="#badaf5"/><rect x="297.9" y="244.8" width="2.0" height="2.1" fill="#badaf5"/><rect x="295.4" y="250.6" width="0.9" height="1.8" fill="#badaf5"/><rect x="299.5" y="259.8" width="2.0" height="1.2" fill="#badaf5"/><rect x="293.3" y="250.7" width="0.8" height="1.4" fill="#badaf5"/><rect x="288.0" y="235.3" width="0.9" height="1.9" fill="#badaf5"/><rect x="287.1" y="238.9" width="1.3" height="2.0" fill="#badaf5"/><rect x="285.9" y="244.6" width="1.6" height="2.0" fill="#badaf5"/><rect x="303.7" y="256.2" width="1.2" height="1.4" fill="#badaf5"/><rect x="292.6" y="256.8" width="2.1" height="1.0" fill="#badaf5"/><rect x="288.2" y="238.5" width="1.1" height="1.5" fill="#badaf5"/><rect x="334.1" y="266.3" width="0.8" height="1.4" fill="#badaf5"/><rect x="328.9" y="273.6" width="2.1" height="1.8" fill="#badaf5"/><rect x="332.4" y="274.8" width="1.7" height="0.9" fill="#badaf5"/><rect x="341.6" y="278.7" width="2.0" height="1.9" fill="#badaf5"/><rect x="329.4" y="269.6" width="0.9" height="1.7" fill="#badaf5"/><rect x="321.5" y="261.6" width="1.1" height="1.0" fill="#badaf5"/><rect x="328.2" y="261.3" width="0.8" height="1.0" fill="#badaf5"/><rect x="322.4" y="268.7" width="0.8" height="2.0" fill="#badaf5"/><rect x="334.7" y="263.6" width="1.2" height="1.3" fill="#badaf5"/><rect x="328.7" y="262.9" width="2.0" height="2.2" fill="#badaf5"/><rect x="331.2" y="271.6" width="0.9" height="0.9" fill="#badaf5"/><rect x="328.2" y="266.4" width="2.0" height="1.0" fill="#badaf5"/><rect x="320.6" y="282.8" width="1.5" height="1.0" fill="#badaf5"/><rect x="333.0" y="260.6" width="1.5" height="2.2" fill="#badaf5"/><rect x="340.7" y="276.7" width="1.2" height="1.3" fill="#badaf5"/><rect x="324.0" y="278.5" width="1.5" height="1.9" fill="#badaf5"/><rect x="327.9" y="265.4" width="1.9" height="2.2" fill="#badaf5"/><rect x="340.5" y="279.3" width="1.9" height="1.8" fill="#badaf5"/><rect x="325.4" y="272.4" width="1.3" height="0.8" fill="#badaf5"/><rect x="320.7" y="266.7" width="1.2" height="1.8" fill="#badaf5"/><rect x="343.0" y="270.7" width="2.1" height="2.2" fill="#badaf5"/><rect x="342.9" y="268.8" width="1.1" height="1.1" fill="#badaf5"/><rect x="311.9" y="233.0" width="1.7" height="2.1" fill="#badaf5"/><rect x="324.8" y="235.8" width="1.7" height="1.9" fill="#badaf5"/><rect x="309.7" y="237.6" width="2.1" height="1.9" fill="#badaf5"/><rect x="323.0" y="235.8" width="1.0" height="1.9" fill="#badaf5"/><rect x="314.7" y="239.0" width="2.2" height="1.4" fill="#badaf5"/><rect x="316.0" y="240.5" width="1.8" height="1.0" fill="#badaf5"/><rect x="310.5" y="232.5" width="2.1" height="1.9" fill="#badaf5"/><rect x="310.9" y="239.3" width="2.2" height="1.7" fill="#badaf5"/><rect x="315.0" y="236.5" width="1.0" height="0.8" fill="#badaf5"/><rect x="327.4" y="237.5" width="1.5" height="2.1" fill="#badaf5"/><rect x="298.9" y="280.5" width="2.0" height="1.1" fill="#3586e1"/><rect x="296.0" y="273.5" width="1.1" height="1.6" fill="#3586e1"/><rect x="296.1" y="275.0" width="1.0" height="2.1" fill="#3586e1"/><rect x="297.7" y="275.5" width="1.6" height="2.1" fill="#3586e1"/><rect x="298.7" y="281.0" width="1.5" height="1.5" fill="#3586e1"/><rect x="300.4" y="270.2" width="1.4" height="1.1" fill="#3586e1"/><rect x="292.1" y="279.6" width="1.0" height="1.5" fill="#3586e1"/><rect x="303.6" y="276.7" width="1.3" height="1.5" fill="#3586e1"/><rect x="364.2" y="387.5" width="1.0" height="1.8" fill="#8fc0ee"/><rect x="351.9" y="365.2" width="2.1" height="1.7" fill="#8fc0ee"/><rect x="364.5" y="386.4" width="2.4" height="1.6" fill="#8fc0ee"/><rect x="366.5" y="375.2" width="1.7" height="2.0" fill="#8fc0ee"/><rect x="360.1" y="376.5" width="1.6" height="2.4" fill="#8fc0ee"/><rect x="370.0" y="391.6" width="2.4" height="1.2" fill="#8fc0ee"/><rect x="364.4" y="394.5" width="2.2" height="1.0" fill="#8fc0ee"/><rect x="346.9" y="372.5" width="0.9" height="1.2" fill="#8fc0ee"/><rect x="344.9" y="382.5" width="2.1" height="2.3" fill="#8fc0ee"/><rect x="348.2" y="384.5" width="1.9" height="1.0" fill="#8fc0ee"/><rect x="377.3" y="395.6" width="1.2" height="2.4" fill="#8fc0ee"/><rect x="357.9" y="374.4" width="2.5" height="2.2" fill="#8fc0ee"/><rect x="348.5" y="372.0" width="1.7" height="1.4" fill="#8fc0ee"/><rect x="349.8" y="367.0" width="2.0" height="0.8" fill="#8fc0ee"/><rect x="364.2" y="372.4" width="0.8" height="1.4" fill="#8fc0ee"/><rect x="367.0" y="375.5" width="0.9" height="2.5" fill="#8fc0ee"/><rect x="373.5" y="395.8" width="1.0" height="1.3" fill="#8fc0ee"/><rect x="343.6" y="387.3" width="1.3" height="1.0" fill="#8fc0ee"/><rect x="358.9" y="393.1" width="2.2" height="1.2" fill="#8fc0ee"/><rect x="348.0" y="393.4" width="1.8" height="2.0" fill="#8fc0ee"/><rect x="345.6" y="355.5" width="2.0" height="1.5" fill="#8fc0ee"/><rect x="344.9" y="394.3" width="1.9" height="2.2" fill="#8fc0ee"/><rect x="345.3" y="390.7" width="0.9" height="2.3" fill="#8fc0ee"/><rect x="360.2" y="367.9" width="1.7" height="2.4" fill="#8fc0ee"/><rect x="352.7" y="358.7" width="1.7" height="1.2" fill="#8fc0ee"/><rect x="346.4" y="360.1" width="0.9" height="1.1" fill="#8fc0ee"/><rect x="354.5" y="366.4" width="2.1" height="1.3" fill="#8fc0ee"/><rect x="362.0" y="360.8" width="1.4" height="0.8" fill="#8fc0ee"/><rect x="352.0" y="353.7" width="2.0" height="1.7" fill="#8fc0ee"/><rect x="349.6" y="373.9" width="2.4" height="1.0" fill="#8fc0ee"/><rect x="374.8" y="372.0" width="1.6" height="2.2" fill="#8fc0ee"/><rect x="357.7" y="375.3" width="2.0" height="2.5" fill="#8fc0ee"/><rect x="355.7" y="389.6" width="2.0" height="1.9" fill="#8fc0ee"/><rect x="358.2" y="368.3" width="0.9" height="1.0" fill="#8fc0ee"/><rect x="344.8" y="385.6" width="1.2" height="1.1" fill="#8fc0ee"/><rect x="345.4" y="390.0" width="2.3" height="1.9" fill="#8fc0ee"/><rect x="353.3" y="363.7" width="1.3" height="1.6" fill="#8fc0ee"/><rect x="348.3" y="372.6" width="1.2" height="2.4" fill="#8fc0ee"/><rect x="380.9" y="377.1" width="1.2" height="2.4" fill="#8fc0ee"/><rect x="354.4" y="368.7" width="0.8" height="1.4" fill="#8fc0ee"/><rect x="361.0" y="425.1" width="1.1" height="1.7" fill="#4a94e4"/><rect x="342.2" y="417.5" width="1.0" height="1.5" fill="#4a94e4"/><rect x="343.7" y="409.7" width="1.3" height="1.2" fill="#4a94e4"/><rect x="365.4" y="425.9" width="2.1" height="1.9" fill="#4a94e4"/><rect x="370.6" y="437.1" width="1.5" height="1.4" fill="#4a94e4"/><rect x="381.4" y="413.8" width="2.0" height="1.9" fill="#4a94e4"/><rect x="343.8" y="435.7" width="2.3" height="1.9" fill="#4a94e4"/><rect x="371.4" y="435.0" width="1.0" height="1.7" fill="#4a94e4"/><rect x="362.2" y="435.7" width="2.2" height="2.2" fill="#4a94e4"/><rect x="365.4" y="437.6" width="2.0" height="2.0" fill="#4a94e4"/><rect x="351.2" y="410.0" width="1.0" height="1.4" fill="#4a94e4"/><rect x="346.2" y="435.7" width="1.7" height="1.9" fill="#4a94e4"/><rect x="367.0" y="430.8" width="1.6" height="0.8" fill="#4a94e4"/><rect x="373.9" y="432.9" width="1.7" height="1.7" fill="#4a94e4"/><rect x="368.4" y="411.1" width="2.1" height="1.2" fill="#4a94e4"/><rect x="345.0" y="417.5" width="2.0" height="1.1" fill="#4a94e4"/><rect x="371.6" y="440.2" width="1.6" height="1.5" fill="#4a94e4"/><rect x="361.2" y="430.9" width="2.1" height="1.8" fill="#4a94e4"/><rect x="367.7" y="411.5" width="1.1" height="1.2" fill="#4a94e4"/><rect x="371.7" y="418.7" width="1.8" height="0.8" fill="#4a94e4"/><rect x="335.9" y="340.4" width="1.3" height="1.3" fill="#3a7fd8"/><rect x="355.6" y="340.8" width="1.1" height="1.1" fill="#3a7fd8"/><rect x="348.9" y="337.4" width="1.5" height="0.8" fill="#3a7fd8"/><rect x="365.3" y="353.7" width="0.6" height="1.1" fill="#3a7fd8"/><rect x="360.2" y="354.4" width="1.0" height="0.9" fill="#3a7fd8"/><rect x="340.7" y="353.9" width="0.8" height="1.2" fill="#3a7fd8"/><rect x="338.5" y="345.5" width="1.6" height="0.7" fill="#3a7fd8"/><rect x="360.2" y="345.2" width="1.5" height="1.3" fill="#3a7fd8"/><rect x="341.4" y="353.0" width="1.1" height="0.6" fill="#3a7fd8"/><rect x="334.1" y="344.8" width="1.1" height="0.9" fill="#3a7fd8"/><rect x="338.5" y="341.9" width="0.9" height="1.4" fill="#3a7fd8"/><rect x="334.1" y="350.0" width="1.4" height="0.7" fill="#3a7fd8"/><rect x="363.6" y="349.3" width="1.5" height="0.9" fill="#3a7fd8"/><rect x="345.9" y="342.9" width="1.6" height="1.2" fill="#3a7fd8"/><rect x="315.2" y="438.3" width="1.1" height="0.9" fill="#fff"/><rect x="310.0" y="448.0" width="1.1" height="1.9" fill="#fff"/><rect x="313.0" y="434.4" width="1.4" height="1.0" fill="#fff"/><rect x="315.5" y="450.9" width="1.9" height="1.8" fill="#fff"/><rect x="320.6" y="449.9" width="1.9" height="1.5" fill="#fff"/><rect x="322.4" y="429.2" width="1.7" height="1.3" fill="#fff"/><rect x="323.1" y="443.5" width="1.1" height="0.9" fill="#fff"/><rect x="326.5" y="431.1" width="1.4" height="1.2" fill="#fff"/><rect x="314.0" y="445.7" width="2.0" height="1.1" fill="#fff"/><rect x="321.1" y="435.2" width="1.5" height="1.3" fill="#fff"/><rect x="311.3" y="431.9" width="1.0" height="1.9" fill="#fff"/><rect x="317.9" y="433.3" width="1.9" height="2.0" fill="#fff"/><rect x="317.0" y="431.4" width="1.0" height="0.9" fill="#fff"/><rect x="314.8" y="430.2" width="1.1" height="1.1" fill="#fff"/><rect x="304.2" y="281.0" width="2.5" height="1.8" fill="#3f92e6"/><rect x="294.8" y="251.9" width="1.8" height="1.7" fill="#3f92e6"/><rect x="273.7" y="232.2" width="2.9" height="1.3" fill="#3f92e6"/><rect x="300.2" y="260.4" width="2.7" height="1.4" fill="#3f92e6"/><rect x="286.3" y="229.9" width="1.8" height="1.9" fill="#3f92e6"/><rect x="327.2" y="277.9" width="2.7" height="1.0" fill="#3f92e6"/><rect x="271.9" y="266.8" width="2.8" height="1.9" fill="#3f92e6"/><rect x="305.2" y="210.0" width="1.8" height="2.9" fill="#3f92e6"/><rect x="319.5" y="278.4" width="2.9" height="1.5" fill="#3f92e6"/><rect x="276.5" y="222.4" width="2.0" height="2.4" fill="#3f92e6"/><rect x="326.5" y="267.7" width="2.3" height="2.5" fill="#3f92e6"/><rect x="297.4" y="254.1" width="1.1" height="2.6" fill="#3f92e6"/><rect x="284.0" y="283.6" width="2.3" height="1.6" fill="#3f92e6"/><rect x="277.7" y="230.1" width="2.3" height="2.4" fill="#3f92e6"/><rect x="276.7" y="215.6" width="2.0" height="2.2" fill="#3f92e6"/><rect x="293.3" y="227.9" width="2.2" height="1.0" fill="#3f92e6"/><rect x="288.1" y="246.9" width="2.9" height="2.3" fill="#3f92e6"/><rect x="323.0" y="248.0" width="1.5" height="1.5" fill="#3f92e6"/><rect x="327.6" y="266.4" width="1.6" height="1.0" fill="#3f92e6"/><rect x="299.9" y="264.0" width="1.8" height="1.5" fill="#3f92e6"/><rect x="310.0" y="284.0" width="1.5" height="1.1" fill="#3f92e6"/><rect x="290.3" y="243.6" width="2.4" height="1.4" fill="#3f92e6"/><rect x="317.8" y="269.1" width="2.0" height="1.4" fill="#3f92e6"/><rect x="328.2" y="234.9" width="2.6" height="1.5" fill="#3f92e6"/><rect x="283.3" y="270.8" width="1.6" height="2.9" fill="#3f92e6"/><rect x="299.7" y="225.0" width="1.4" height="1.8" fill="#3f92e6"/><rect x="309.9" y="285.9" width="1.3" height="1.8" fill="#3f92e6"/><rect x="282.8" y="287.9" width="1.3" height="1.1" fill="#3f92e6"/><rect x="273.6" y="241.5" width="2.8" height="2.8" fill="#3f92e6"/><rect x="314.0" y="289.8" width="2.9" height="1.7" fill="#3f92e6"/><rect x="326.1" y="261.8" width="2.5" height="1.1" fill="#3f92e6"/><rect x="354.9" y="233.9" width="1.7" height="1.7" fill="#3f92e6"/><rect x="325.2" y="215.1" width="1.6" height="1.7" fill="#3f92e6"/><rect x="372.3" y="221.2" width="2.9" height="1.4" fill="#3f92e6"/><rect x="336.4" y="256.1" width="2.6" height="1.9" fill="#3f92e6"/><rect x="318.0" y="238.7" width="1.7" height="2.8" fill="#3f92e6"/><rect x="326.6" y="233.2" width="2.8" height="1.1" fill="#3f92e6"/><rect x="339.6" y="255.6" width="2.5" height="1.1" fill="#3f92e6"/><rect x="317.1" y="218.1" width="2.8" height="1.5" fill="#3f92e6"/><rect x="359.8" y="259.9" width="1.7" height="1.5" fill="#3f92e6"/><rect x="372.5" y="245.8" width="1.5" height="2.4" fill="#3f92e6"/><rect x="334.0" y="228.8" width="1.0" height="2.5" fill="#3f92e6"/><rect x="370.0" y="246.7" width="2.9" height="1.0" fill="#3f92e6"/><rect x="329.0" y="238.8" width="2.9" height="2.9" fill="#3f92e6"/><rect x="338.2" y="227.6" width="1.9" height="2.0" fill="#3f92e6"/><rect x="370.7" y="224.1" width="2.6" height="2.5" fill="#3f92e6"/><rect x="364.4" y="253.6" width="2.2" height="1.7" fill="#3f92e6"/><rect x="334.2" y="233.1" width="2.6" height="1.2" fill="#3f92e6"/><rect x="326.8" y="252.6" width="1.5" height="1.1" fill="#3f92e6"/><rect x="317.0" y="242.6" width="1.7" height="3.0" fill="#3f92e6"/><rect x="368.0" y="264.4" width="1.5" height="1.2" fill="#3f92e6"/><rect x="320.8" y="239.9" width="2.4" height="1.9" fill="#3f92e6"/><rect x="329.1" y="235.8" width="2.2" height="2.3" fill="#3f92e6"/><rect x="359.9" y="257.3" width="2.3" height="1.2" fill="#3f92e6"/><rect x="365.5" y="229.7" width="2.1" height="1.7" fill="#3f92e6"/><rect x="359.3" y="225.0" width="1.5" height="1.5" fill="#3f92e6"/><rect x="324.2" y="259.2" width="2.2" height="1.7" fill="#3f92e6"/><rect x="338.8" y="264.6" width="2.0" height="1.5" fill="#3f92e6"/><rect x="363.5" y="247.7" width="3.0" height="1.2" fill="#3f92e6"/><rect x="343.5" y="256.0" width="2.7" height="2.8" fill="#3f92e6"/></g>
</g>
<g fill="none" stroke="#5f7fc9" stroke-width="1" shape-rendering="crispEdges"><rect x="175.5" y="132.5" width="281" height="339"/></g>
<g fill="#fff" stroke="#5f7fc9" stroke-width="1" shape-rendering="crispEdges"><rect x="172.5" y="129.5" width="5" height="5"/><rect x="313.5" y="129.5" width="5" height="5"/><rect x="453.5" y="129.5" width="5" height="5"/><rect x="172.5" y="298.5" width="5" height="5"/><rect x="453.5" y="298.5" width="5" height="5"/><rect x="172.5" y="468.5" width="5" height="5"/><rect x="313.5" y="468.5" width="5" height="5"/><rect x="453.5" y="468.5" width="5" height="5"/></g>
</svg>
<!--ANNOT-->
<svg class="a" style="left:0;top:0" width="750" height="750" viewBox="0 0 750 750"><path d="M40 103 L170 116" stroke="#d4245c" stroke-width="1.4" fill="none"/></svg>
<div class="t ann" id="an1" style="transform:scaleX(1.0867);left:174px;top:109px;">Use the selection tool, and drag over the artwork you want to group.</div>
<div class="t ann" id="an2" style="transform:scaleX(1.0809);left:131px;top:509.7px;">Right click, once the artwork</div>
<div class="t ann" id="an3" style="transform:scaleX(1.0323);left:131px;top:530.2px;">is selected and select “Group”.</div>
<!--CMENU-->
<div class="a" id="cm">
<div class="a" style="left:0;top:99px;width:215px;height:27px;background:#f9e47e"></div>
<div class="ms" style="top:46px"></div>
<div class="ms" style="top:73px"></div>
<div class="ms" style="top:148px"></div>
<div class="mi" id="c1" style="transform:scaleX(0.9386);top:5px;transform-origin:0 50%">Undo Layers Panel Options</div>
<div class="mi dis" id="c2" style="transform:scaleX(0.8909);top:25px;transform-origin:0 50%">Redo</div>
<div class="mi" id="c3" style="transform:scaleX(0.9283);top:52px;transform-origin:0 50%">Make Pixel Perfect</div>
<div class="mi dis" id="c4" style="transform:scaleX(0.9252);top:80px;transform-origin:0 50%">Perspective</div>
<svg class="a" style="left:198px;top:82px" width="7" height="9" viewBox="0 0 7 9"><path d="M1.5 1 L5 4.5 L1.5 8" stroke="#9a9a9a" stroke-width="1.2" fill="none"/></svg>
<div class="mi dis" id="c5" style="transform:scaleX(0.9384);top:106px;transform-origin:0 50%">Group</div>
<div class="mi" id="c6" style="transform:scaleX(0.9657);top:127px;transform-origin:0 50%">Make Clipping Mask</div>
<div class="mi" id="c7" style="transform:scaleX(0.9618);top:154px;transform-origin:0 50%">Transform</div>
<svg class="a" style="left:198px;top:156px" width="7" height="9" viewBox="0 0 7 9"><path d="M1.5 1 L5 4.5 L1.5 8" stroke="#333" stroke-width="1.2" fill="none"/></svg>
<div class="mi" id="c8" style="transform:scaleX(0.9433);top:175px;transform-origin:0 50%">Arrange</div>
<svg class="a" style="left:198px;top:177px" width="7" height="9" viewBox="0 0 7 9"><path d="M1.5 1 L5 4.5 L1.5 8" stroke="#333" stroke-width="1.2" fill="none"/></svg>
<div class="mi" id="c9" style="transform:scaleX(0.8884);top:195px;transform-origin:0 50%">Select</div>
<svg class="a" style="left:198px;top:197px" width="7" height="9" viewBox="0 0 7 9"><path d="M1.5 1 L5 4.5 L1.5 8" stroke="#333" stroke-width="1.2" fill="none"/></svg>
<div class="mi" id="c10" style="transform:scaleX(0.9691);top:216px;transform-origin:0 50%">Add to Library</div>
<div class="mi" id="c11" style="transform:scaleX(0.9345);top:236px;transform-origin:0 50%">Collect For Export</div>
<svg class="a" style="left:198px;top:238px" width="7" height="9" viewBox="0 0 7 9"><path d="M1.5 1 L5 4.5 L1.5 8" stroke="#333" stroke-width="1.2" fill="none"/></svg>
<div class="mi" id="c12" style="transform:scaleX(0.9215);top:257px;transform-origin:0 50%">Export Selection...</div>
</div>
<svg class="a" style="left:0;top:0;pointer-events:none" width="750" height="750" viewBox="0 0 750 750"><path d="M382 415 L320 502" stroke="#d4245c" stroke-width="1.4" fill="none"/></svg>
</div>
</body>
</html>
